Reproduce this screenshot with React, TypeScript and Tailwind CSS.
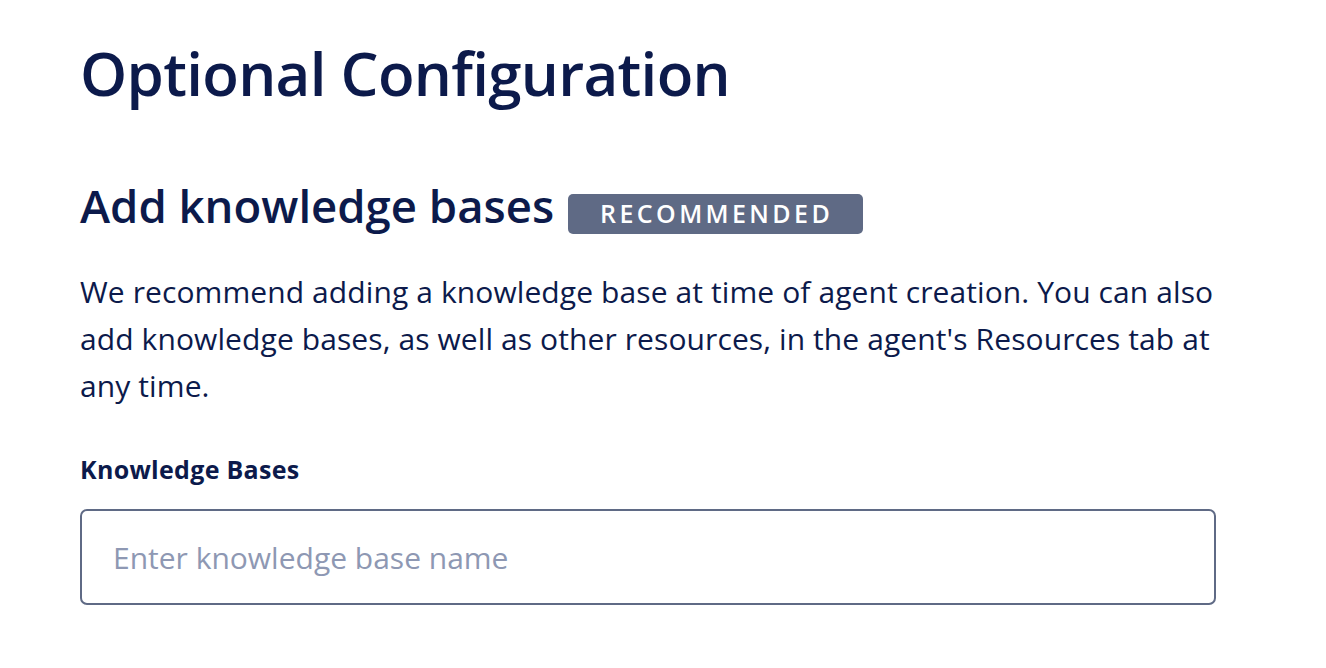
import React from "react";

export default function App() {
  return (
    <div className="min-h-screen bg-white text-[#0c1a4b] font-['Open_Sans',sans-serif]">
      <div className="ml-[80px] w-[1136px] pt-[37px]">
        <h1 className="text-[60px] leading-[72px] font-semibold tracking-[-0.7px]">Optional Configuration</h1>

        <div className="mt-[70px] flex items-start gap-[14px]">
          <h2 className="text-[45.5px] leading-[52px] font-semibold">Add knowledge bases</h2>
          <span className="mt-[15px] flex h-[40px] items-center rounded-[5px] bg-[#5f6a85] pl-[32px] pr-[30px] text-[25px] font-semibold tracking-[3.4px] text-white">
            RECOMMENDED
          </span>
        </div>

        <p className="mt-[34px] w-[1140px] text-[30px] leading-[47px] tracking-[0.1px]">
          We recommend adding a knowledge base at time of agent creation. You can also add knowledge bases, as well as other resources, in the agent's Resources tab at any time.
        </p>

        <label className="mt-[44px] block text-[25px] leading-[32px] font-bold tracking-[0.3px]">Knowledge Bases</label>

        <input
          className="mt-[24px] block h-[96px] w-full rounded-[7px] border-2 border-[#5f6a85] bg-white px-[31px] text-[30px] text-[#0c1a4b] outline-none placeholder:text-[#8e98b3]"
          placeholder="Enter knowledge base name"
        />
      </div>
    </div>
  );
}
